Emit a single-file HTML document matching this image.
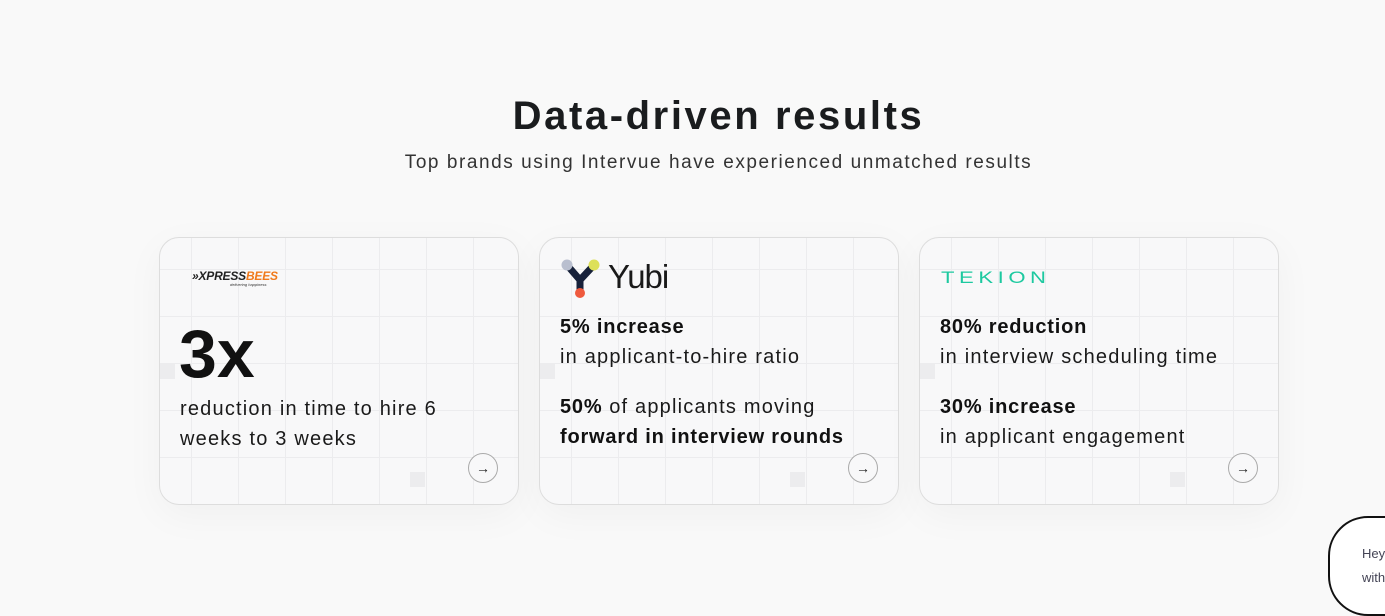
<!DOCTYPE html>
<html><head><style>
*{margin:0;padding:0;box-sizing:border-box}
body{width:1385px;height:599px;background:#f9f9f9;font-family:"Liberation Sans",sans-serif;color:#111;position:relative;overflow:hidden}
h1{position:absolute;top:94px;left:26px;width:1385px;text-align:center;font-size:40px;font-weight:700;letter-spacing:2.6px;color:#1a1c1e}
.sub{position:absolute;top:152px;left:26px;width:1385px;text-align:center;font-size:19px;color:#333;letter-spacing:1.55px}
.card{position:absolute;top:237px;width:360px;height:268px;border:1px solid #ddd;border-radius:20px;background-color:#f8f8f9;
background-image:linear-gradient(#ececee 1px,transparent 1px),linear-gradient(90deg,#ececee 1px,transparent 1px);background-size:47px 47px;background-position:-16px -16px;box-shadow:0 10px 40px rgba(0,0,0,0.04);overflow:hidden}
.t{position:absolute;left:20px;font-size:20px;line-height:30px;color:#1a1a1a;letter-spacing:1.2px;white-space:nowrap}
.t b{font-weight:700;color:#111;letter-spacing:0.8px}
.arr{position:absolute;right:20px;bottom:21px;width:30px;height:30px;border:1px solid #aaa;border-radius:50%;font-size:14px;text-align:center;line-height:28px;color:#222;background:#f8f8f9}
.sq{position:absolute;width:15px;height:15px;background:#ececee}
.chat{position:absolute;left:1328px;top:516px;width:120px;height:100px;border:2px solid #111;border-radius:40px;background:#fff;font-size:13px;color:#445;padding:24px 0 0 32px;line-height:24px}
</style></head><body>
<h1>Data-driven results</h1>
<div class="sub">Top brands using Intervue have experienced unmatched results</div>

<div class="card" style="left:159px">
<div class="sq" style="left:0;top:126px"></div><div class="sq" style="left:250px;top:234px"></div>
<div style="position:absolute;left:32px;top:31px;font-size:12px;font-weight:700;font-style:italic;letter-spacing:-0.2px"><span style="color:#222">»XPRESS</span><span style="color:#f07a1c">BEES</span></div>
<div style="position:absolute;left:70px;top:44px;font-size:4px;font-style:italic;color:#333">delivering happiness</div>
<div style="position:absolute;left:19px;top:76px;font-size:68px;font-weight:700;line-height:80px">3x</div>
<div class="t" style="top:156px">reduction in time to hire 6<br>weeks to 3 weeks</div>
<div class="arr">→</div>
</div>

<div class="card" style="left:539px">
<div class="sq" style="left:0;top:126px"></div><div class="sq" style="left:250px;top:234px"></div>
<svg style="position:absolute;left:20px;top:20px" width="44" height="42" viewBox="0 0 44 42">
<path d="M7 7 L20 22 L34 7 M20 22 L20 34" stroke="#17213a" stroke-width="7" fill="none" stroke-linecap="round"/>
<circle cx="7" cy="7" r="5.5" fill="#b9bfcf"/><circle cx="34" cy="7" r="5.5" fill="#dde05a"/><circle cx="20" cy="35" r="5" fill="#ef5a3e"/></svg>
<div style="position:absolute;left:68px;top:20px;font-size:33px;color:#1a1a1a;letter-spacing:-1px">Yubi</div>
<div class="t" style="top:74px"><b>5% increase</b><br>in applicant-to-hire ratio</div>
<div class="t" style="top:154px"><b>50%</b> of applicants moving<br><b>forward in interview rounds</b></div>
<div class="arr">→</div>
</div>

<div class="card" style="left:919px">
<div class="sq" style="left:0;top:126px"></div><div class="sq" style="left:250px;top:234px"></div>
<div style="position:absolute;left:21px;top:30px;font-size:17px;color:#1dc9a0;letter-spacing:3.5px;transform:scaleX(1.3);transform-origin:left">TEKION</div>
<div class="t" style="top:74px"><b>80% reduction</b><br>in interview scheduling time</div>
<div class="t" style="top:154px"><b>30% increase</b><br>in applicant engagement</div>
<div class="arr">→</div>
</div>

<div class="chat">Hey<br>with</div>
</body></html>
